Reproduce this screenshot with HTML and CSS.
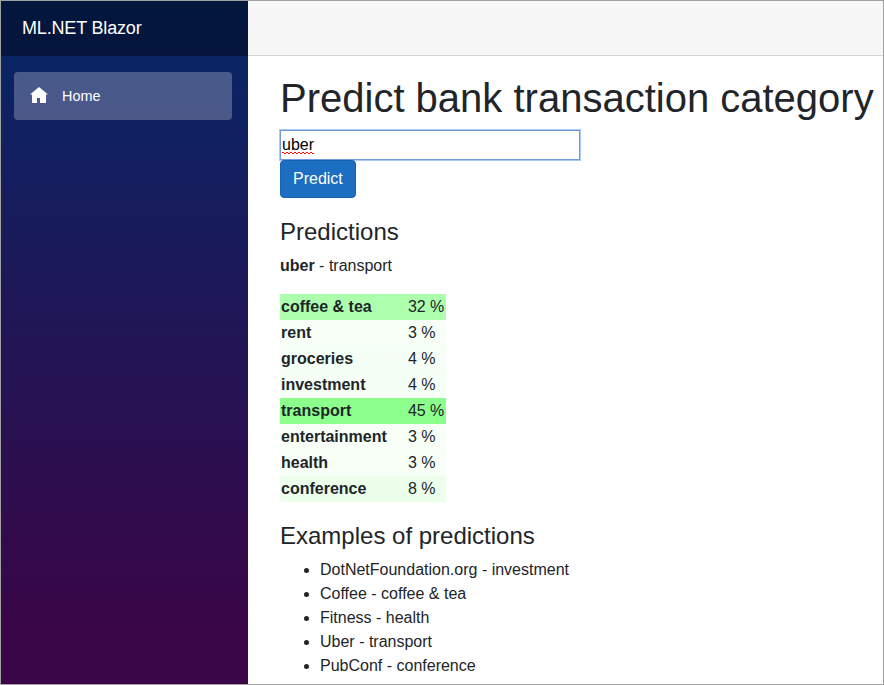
FILE: index.html
```html
<!DOCTYPE html>
<html lang="en">
<head>
<meta charset="utf-8">
<title>ML.NET Blazor</title>
<link rel="stylesheet" href="styles.css">
</head>
<body>
<div class="app">
  <aside class="sidebar">
    <div class="brand">ML.NET Blazor</div>
    <nav class="nav">
      <a class="nav-link"><svg class="home-icon" viewBox="0 0 18 16"><path d="M9 0L0 7.5h2V16h5v-5h3v5h6V7.5h2z" fill="#fff"/></svg><span>Home</span></a>
    </nav>
  </aside>
  <main class="main">
    <div class="top-row"></div>
    <div class="content">
      <h1>Predict bank transaction category</h1>
      <div class="field"><span class="typed">uber</span></div>
      <button class="btn">Predict</button>
      <h3>Predictions</h3>
      <p><b>uber</b> - transport</p>
      <table>
        <tr class="p32"><th>coffee &amp; tea</th><td>32 %</td></tr>
        <tr class="p3"><th>rent</th><td>3 %</td></tr>
        <tr class="p4"><th>groceries</th><td>4 %</td></tr>
        <tr class="p4"><th>investment</th><td>4 %</td></tr>
        <tr class="p45"><th>transport</th><td>45 %</td></tr>
        <tr class="p3"><th>entertainment</th><td>3 %</td></tr>
        <tr class="p3"><th>health</th><td>3 %</td></tr>
        <tr class="p8"><th>conference</th><td>8 %</td></tr>
      </table>
      <h3>Examples of predictions</h3>
      <ul>
        <li>DotNetFoundation.org - investment</li>
        <li>Coffee - coffee &amp; tea</li>
        <li>Fitness - health</li>
        <li>Uber - transport</li>
        <li>PubConf - conference</li>
      </ul>
    </div>
  </main>
</div>
</body>
</html>
```
FILE: styles.css
```css
* { box-sizing: border-box; }
body {
  margin: 0;
  font: 16px/24px "Liberation Sans", Arial, sans-serif;
  color: #212529;
  background: #fff;
}
.app {
  display: flex;
  height: 685px;
  border: 1px solid #a0a0a0;
  overflow: hidden;
}
.sidebar {
  width: 247px;
  flex: none;
  background: linear-gradient(180deg, #052767 0%, #3a0647 92%);
}
.brand {
  height: 55px;
  padding-left: 21px;
  line-height: 54px;
  font-size: 18px;
  letter-spacing: -0.17px;
  color: #fff;
  background: rgba(0, 0, 0, 0.4);
}
.nav { padding: 16px 16px 0 13px; }
.nav-link {
  display: flex;
  align-items: center;
  height: 48px;
  padding-left: 16px;
  border-radius: 4px;
  font-size: 14.4px;
  color: #fff;
  background: rgba(255, 255, 255, 0.25);
}
.home-icon { width: 18px; height: 16px; margin: 0 14px 2px 0; }
.main { flex: 1; min-width: 0; }
.top-row {
  height: 55px;
  background: #f7f7f7;
  border-bottom: 1px solid #d6d5d5;
}
.content { padding: 18px 0 0 32px; }
h1, h3 { margin: 0 0 8px; font-weight: 400; line-height: 1.2; }
h1 { font-size: 40px; white-space: nowrap; }
h3 { font-size: 24px; margin: 20px 0 7px; }
.field {
  width: 300px;
  height: 30px;
  padding-left: 1px;
  border: 1px solid #7398dc;
  box-shadow: 0 0 0 1px #a9c8fb;
  line-height: 28px;
  color: #000;
}
/* spell-check squiggle: a zigzag with a 4px period */
.typed {
  padding-bottom: 1px;
  background:
    linear-gradient(45deg, transparent 34%, #f00 34% 66%, transparent 66%) 0 100% / 4px 2px repeat-x,
    linear-gradient(135deg, transparent 34%, #f00 34% 66%, transparent 66%) 2px 100% / 4px 2px repeat-x;
}
.btn {
  display: block;
  position: relative;
  height: 38px;
  padding: 0 12px;
  border: 1px solid #1861ac;
  border-radius: 4px;
  background: #1b6ec2;
  color: #fff;
  font: inherit;
}
p { margin: 0 0 16px; }
table { width: 166px; border-collapse: collapse; }
th, td { height: 26px; padding: 1px; text-align: left; }
th { width: 127px; }
td { letter-spacing: -0.1px; }
.p32 { background: #adffad; }
.p3 { background: #f7fff7; }
.p4 { background: #f5fff5; }
.p45 { background: #8cff8c; }
.p8 { background: #ebffeb; }
ul { margin: 0; padding-left: 40px; }
```
